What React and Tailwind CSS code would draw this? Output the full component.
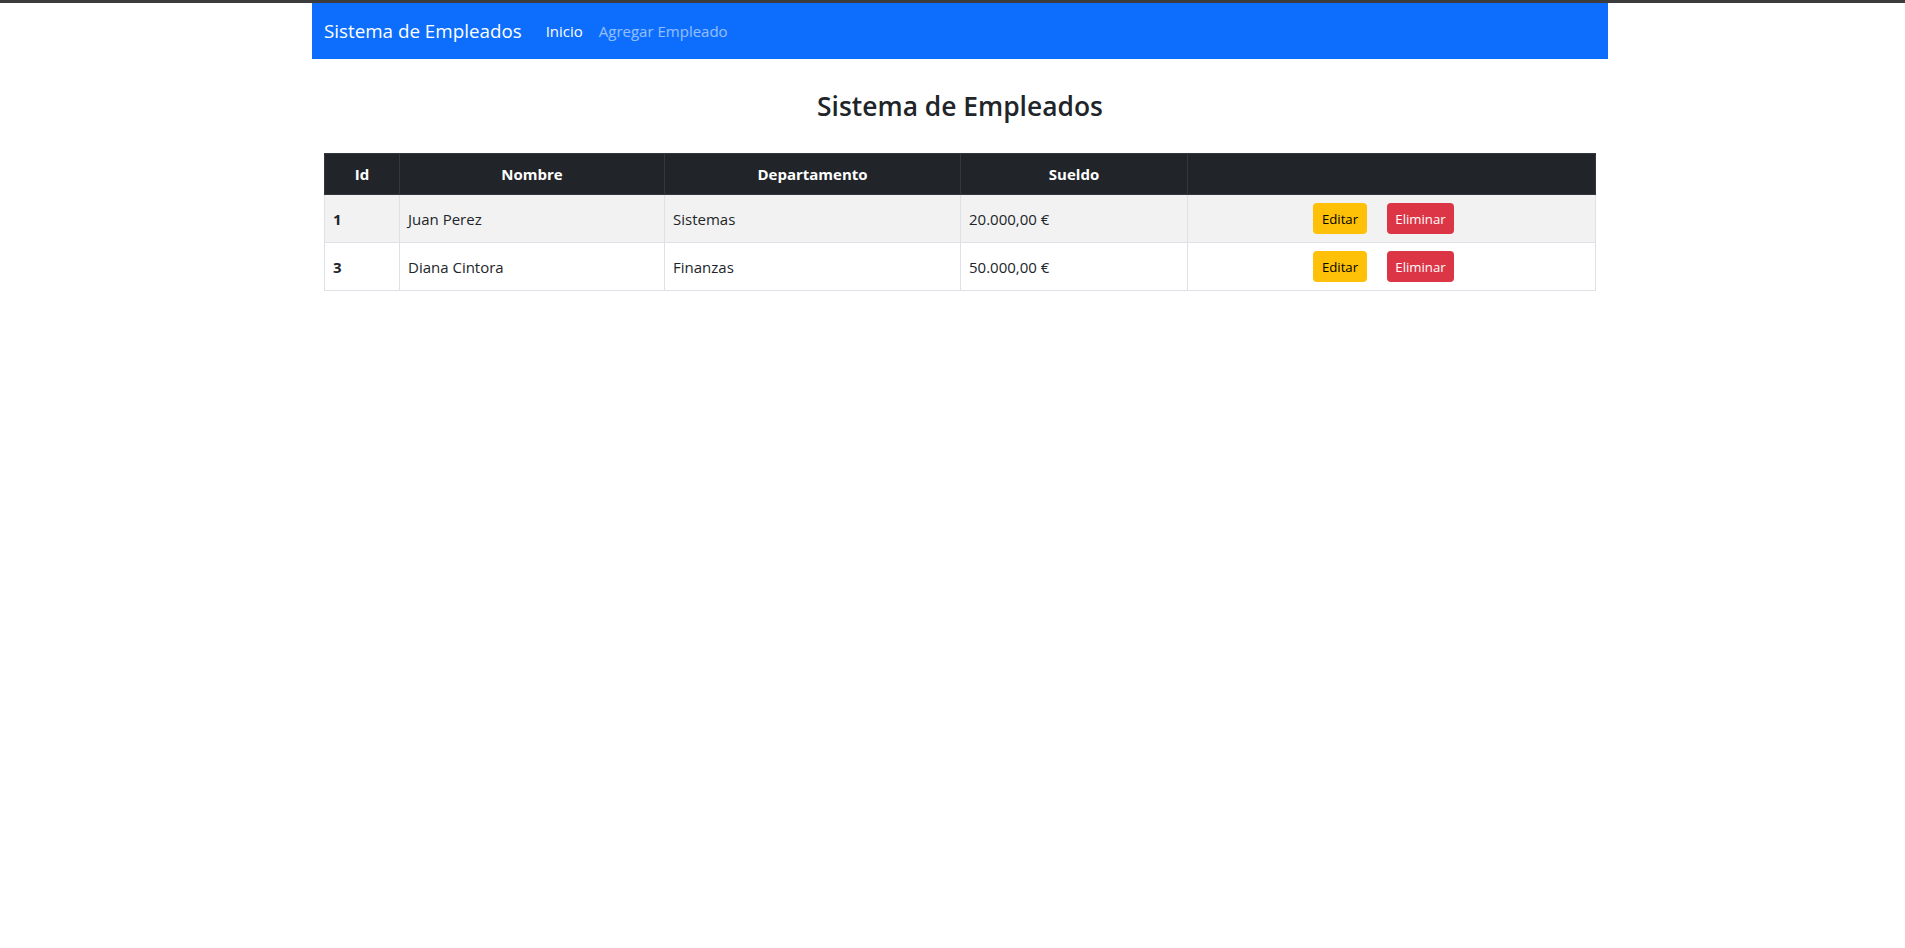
import React from "react";

const rows = [
  { id: 1, nombre: "Juan Perez", dep: "Sistemas", sueldo: "20.000,00 €" },
  { id: 3, nombre: "Diana Cintora", dep: "Finanzas", sueldo: "50.000,00 €" },
];

export default function App() {
  return (
    <div className="min-h-[948px] bg-white text-[#212529]" style={{ fontFamily: '"Open Sans", "Noto Sans", sans-serif' }}>
      <div className="h-[3px] bg-[#3c3c3c]" />
      <div className="ml-[312px] w-[1296px]">
        <nav className="flex h-[56px] items-center bg-[#0d6efd] px-3">
          <span className="mr-4 text-[18.8px] leading-[30px] text-white">Sistema de Empleados</span>
          <a className="px-2 text-[15px] leading-6 text-white">Inicio</a>
          <a className="px-2 text-[15px] leading-6 text-white/55">Agregar Empleado</a>
        </nav>
        <div className="px-3">
          <h3 className="mt-[30px] mb-[30px] text-center text-[26.4px] font-semibold leading-[34px]">Sistema de Empleados</h3>
          <table className="w-full border-collapse text-[15px] leading-6">
            <thead>
              <tr className="bg-[#212529] text-white">
                <th className="w-[75px] border border-[#32383e] p-2 text-center font-bold">Id</th>
                <th className="w-[265px] border border-[#32383e] p-2 text-center font-bold">Nombre</th>
                <th className="w-[296px] border border-[#32383e] p-2 text-center font-bold">Departamento</th>
                <th className="w-[227px] border border-[#32383e] p-2 text-center font-bold">Sueldo</th>
                <th className="border border-[#32383e] p-2"></th>
              </tr>
            </thead>
            <tbody>
              {rows.map((r, i) => (
                <tr key={r.id} className={i % 2 === 0 ? "bg-[#f2f2f2]" : "bg-white"}>
                  <td className="border border-[#dee2e6] p-2 align-middle font-bold">{r.id}</td>
                  <td className="border border-[#dee2e6] p-2 align-middle">{r.nombre}</td>
                  <td className="border border-[#dee2e6] p-2 align-middle">{r.dep}</td>
                  <td className="border border-[#dee2e6] p-2 align-middle">{r.sueldo}</td>
                  <td className="border border-[#dee2e6] p-2 align-middle">
                    <div className="flex justify-center gap-5 pr-4">
                      <button className="h-[31px] w-[54px] rounded-[4px] bg-[#ffc107] text-[13.2px] text-black">Editar</button>
                      <button className="h-[31px] w-[67px] rounded-[4px] bg-[#dc3545] text-[13.2px] text-white">Eliminar</button>
                    </div>
                  </td>
                </tr>
              ))}
            </tbody>
          </table>
        </div>
      </div>
    </div>
  );
}
